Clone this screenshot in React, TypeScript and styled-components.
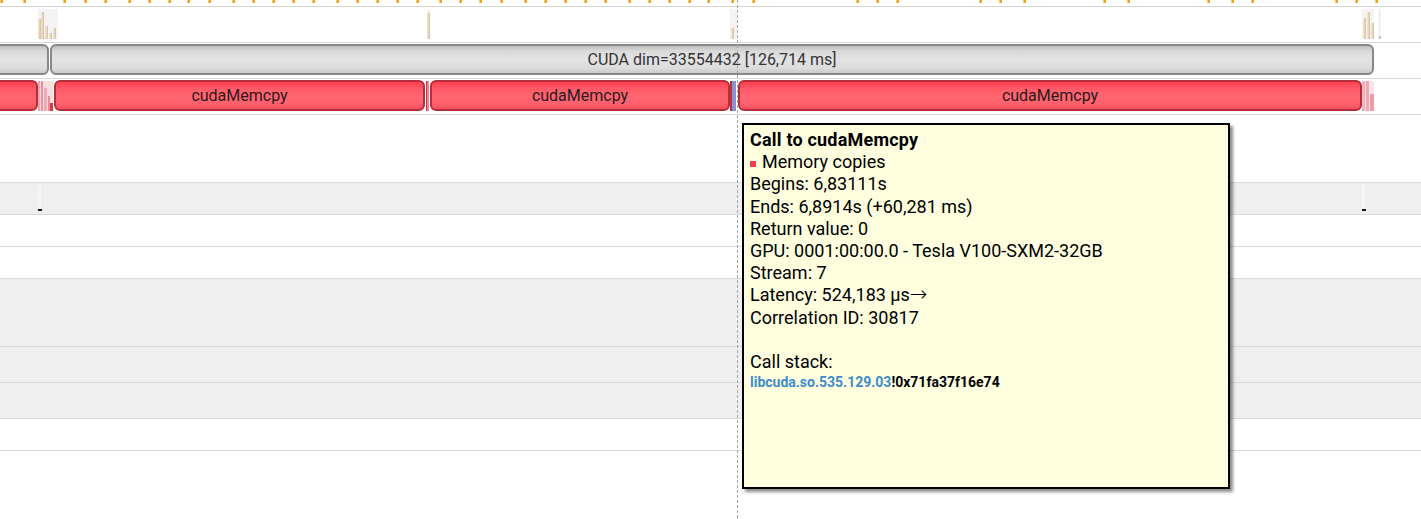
import styled, { createGlobalStyle } from "styled-components"

const GlobalStyle = createGlobalStyle`
  html, body {
    margin: 0;
    padding: 0;
    background: #ffffff;
    overflow: hidden;
  }
  body {
    font-family: Roboto, "Liberation Sans", sans-serif;
  }
`

const Page = styled.div`
  position: relative;
  display: flex;
  flex-direction: column;
  width: 1421px;
  height: 519px;
  overflow: hidden;
  background: #ffffff;
`

const Ruler = styled.div`
  position: relative;
  height: 6px;
  flex: none;
  border-bottom: 1px solid #d6d6d6;
`

const Tick = styled.div`
  position: absolute;
  top: 0;
  width: 3px;
  height: 3px;
  background: linear-gradient(to right, #f2c98a 0, #f2c98a 1px, #f5a31a 1px);
`

const Track = styled.div<{ $h: number; $shaded?: boolean }>`
  position: relative;
  flex: none;
  height: ${(p) => p.$h}px;
  background: ${(p) => (p.$shaded ? "#efefef" : "#ffffff")};
  border-bottom: 1px solid #d9d9d9;
`

const Slice = styled.div<{ $kind: "api" | "memcpy" }>`
  position: absolute;
  top: 1px;
  height: 31px;
  box-sizing: border-box;
  display: flex;
  align-items: center;
  justify-content: center;
  border-radius: 6px;
  border: 2px solid ${(p) => (p.$kind === "api" ? "#888888" : "#b2303c")};
  background: ${(p) =>
    p.$kind === "api"
      ? "linear-gradient(to bottom, #bdbdbd 0%, #d9d9d9 18%, #e3e3e3 50%, #dcdcdc 82%, #cacaca 100%)"
      : "linear-gradient(to bottom, #ff3f50 0%, #ff5a67 25%, #ff6672 55%, #ff5e6b 85%, #f54c5b 100%)"};
  font-size: 16px;
  color: ${(p) => (p.$kind === "api" ? "#333333" : "#2a1a1c")};
  white-space: nowrap;
  overflow: hidden;
`

const Spike = styled.div`
  position: absolute;
  bottom: 3px;
`

const Marker = styled.div`
  position: absolute;
  top: 2px;
  width: 3px;
  height: 22px;
  background: #f6f6f6;
  &::after {
    content: "";
    position: absolute;
    left: 0;
    top: 24px;
    width: 4px;
    height: 2px;
    background: #1a1a1a;
  }
`

const Cursor = styled.div`
  position: absolute;
  left: 737px;
  top: 0;
  width: 1px;
  height: 100%;
  background: repeating-linear-gradient(to bottom, #a8a8a8 0, #a8a8a8 3px, transparent 3px, transparent 5px);
  z-index: 2;
`

const Tooltip = styled.div`
  position: absolute;
  left: 742px;
  top: 123px;
  width: 488px;
  height: 366px;
  box-sizing: border-box;
  padding: 4px 6px;
  border: 2px solid #000000;
  background: #ffffe0;
  box-shadow: 3px 3px 3px rgba(0, 0, 0, 0.45);
  font-size: 18px;
  line-height: 22.2px;
  color: #000000;
  z-index: 3;
`

const Title = styled.div`
  font-weight: bold;
  letter-spacing: 0.2px;
`

const Line = styled.div`
  white-space: nowrap;
  min-height: 22.2px;
`

const Arrow = styled.span`
  font-family: "DejaVu Sans", sans-serif;
  font-weight: 200;
  font-size: 21px;
  line-height: 1;
`

const Swatch = styled.span`
  display: inline-block;
  width: 6px;
  height: 6px;
  margin-right: 6px;
  background: #f5414f;
  vertical-align: 1px;
`

const Stack = styled.div`
  font-size: 14px;
  line-height: 18px;
  font-weight: bold;
`

const Lib = styled.span`
  color: #3d8ccc;
`

const ticks = [
  0, 23, 63, 84, 104, 128, 148, 168, 187, 208, 232, 252, 272, 292, 312, 336, 356, 376, 396, 416, 439, 459,
  479, 500, 524, 544, 564, 584, 604, 628, 648, 668, 688, 707, 731, 752, 856, 876, 896, 979, 999, 1023, 1103,
  1127, 1207, 1231, 1251, 1335, 1355, 1375,
]

const tan = "linear-gradient(to right, #fde8c8, #cdbfae)"
const ghost = "#f3f3f3"

// [left, top-from-track, width, background]
const histogram: [number, number, number, string][] = [
  [38, 2, 20, ghost],
  [38, 12, 3, tan],
  [41, 5, 3, tan],
  [45, 19, 3, tan],
  [49, 26, 3, tan],
  [53, 21, 3, tan],
  [427, 3, 3, "#f4efe6"],
  [427, 6, 3, tan],
  [730, 2, 7, ghost],
  [731, 21, 3, tan],
  [1362, 2, 12, ghost],
  [1363, 11, 3, tan],
  [1367, 5, 3, tan],
  [1371, 16, 3, tan],
  [1378, 2, 3, ghost],
  [1379, 29, 2, "#cdbfae"],
]

const memcpyFringe: [number, number, number, string][] = [
  [38, 2, 15, "#f6dde0"],
  [38, 2, 2, "#f4a2ac"],
  [41, 2, 2, "#f08f9d"],
  [44, 9, 3, "#f2a9b1"],
  [48, 17, 2, "#f08998"],
  [50, 24, 3, "#d23a4a"],
  [426, 2, 1, "#c23848"],
  [427, 2, 2, "#f08592"],
  [730, 2, 2, "#c02f3f"],
  [732, 2, 4, "#8494d6"],
  [1362, 2, 12, "#f8e4e6"],
  [1362, 2, 3, "#f4b2ba"],
  [1366, 2, 3, "#f3a6af"],
  [1370, 15, 4, "#f09aa5"],
]

const rest: { h: number; shaded?: boolean; markers?: boolean }[] = [
  { h: 67 },
  { h: 31, shaded: true, markers: true },
  { h: 31 },
  { h: 31 },
  { h: 67, shaded: true },
  { h: 35, shaded: true },
  { h: 35, shaded: true },
  { h: 31 },
]

const Spikes = ({ data }: { data: [number, number, number, string][] }) => (
  <>
    {data.map(([left, top, width, bg], i) => (
      <Spike key={i} style={{ left, top, width, background: bg }} />
    ))}
  </>
)

export default function App() {
  return (
    <>
      <GlobalStyle />
      <Page>
        <Ruler>
          {ticks.map((x) => (
            <Tick key={x} style={{ left: x }} />
          ))}
        </Ruler>
        <Track $h={35}>
          <Spikes data={histogram} />
        </Track>
        <Track $h={35}>
          <Slice $kind="api" style={{ left: -20, width: 69 }} />
          <Slice $kind="api" style={{ left: 50, width: 1324 }}>
            CUDA dim=33554432 [126,714 ms]
          </Slice>
        </Track>
        <Track $h={35}>
          <Slice $kind="memcpy" style={{ left: -20, width: 58 }} />
          <Spikes data={memcpyFringe} />
          <Slice $kind="memcpy" style={{ left: 54, width: 371 }}>
            cudaMemcpy
          </Slice>
          <Slice $kind="memcpy" style={{ left: 430, width: 300 }}>
            cudaMemcpy
          </Slice>
          <Slice $kind="memcpy" style={{ left: 738, width: 624 }}>
            cudaMemcpy
          </Slice>
        </Track>
        {rest.map((r, i) => (
          <Track key={i} $h={r.h} $shaded={r.shaded}>
            {r.markers && (
              <>
                <Marker style={{ left: 38 }} />
                <Marker style={{ left: 1362 }} />
              </>
            )}
          </Track>
        ))}
        <Cursor />
        <Tooltip>
          <Title>Call to cudaMemcpy</Title>
          <Line>
            <Swatch />
            Memory copies
          </Line>
          <Line>Begins: 6,83111s</Line>
          <Line>Ends: 6,8914s (+60,281 ms)</Line>
          <Line>Return value: 0</Line>
          <Line>GPU: 0001:00:00.0 - Tesla V100-SXM2-32GB</Line>
          <Line>Stream: 7</Line>
          <Line>
            Latency: 524,183 μs<Arrow>→</Arrow>
          </Line>
          <Line>Correlation ID: 30817</Line>
          <Line />
          <Line>Call stack:</Line>
          <Stack>
            <Lib>libcuda.so.535.129.03</Lib>!0x71fa37f16e74
          </Stack>
        </Tooltip>
      </Page>
    </>
  )
}
